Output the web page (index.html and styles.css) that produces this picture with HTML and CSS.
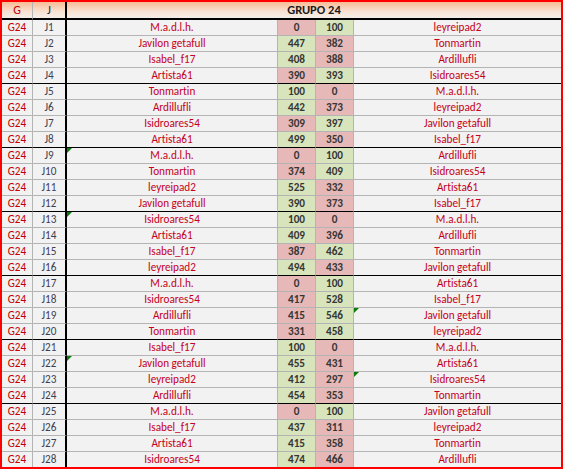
FILE: index.html
```html
<!DOCTYPE html>
<html>
<head>
<meta charset="utf-8">
<link rel="stylesheet" href="styles.css">
</head>
<body>
<div class="sheet">
  <div class="c hd g">G</div><div class="c hd j sep">J</div><div class="c hd title">GRUPO 24</div>

  <div class="c g">G24</div><div class="c j sep">J1</div><div class="c n">M.a.d.l.h.</div><div class="c s red">0</div><div class="c s grn">100</div><div class="c n last">leyreipad2</div>
  <div class="c g">G24</div><div class="c j sep">J2</div><div class="c n">Javilon getafull</div><div class="c s grn">447</div><div class="c s red">382</div><div class="c n last">Tonmartin</div>
  <div class="c g">G24</div><div class="c j sep">J3</div><div class="c n">Isabel_f17</div><div class="c s grn">408</div><div class="c s red">388</div><div class="c n last">Ardillufli</div>
  <div class="c g end">G24</div><div class="c j sep end">J4</div><div class="c n end">Artista61</div><div class="c s red end">390</div><div class="c s grn end">393</div><div class="c n last end">Isidroares54</div>

  <div class="c g">G24</div><div class="c j sep">J5</div><div class="c n">Tonmartin</div><div class="c s grn">100</div><div class="c s red">0</div><div class="c n last">M.a.d.l.h.</div>
  <div class="c g">G24</div><div class="c j sep">J6</div><div class="c n">Ardillufli</div><div class="c s grn">442</div><div class="c s red">373</div><div class="c n last">leyreipad2</div>
  <div class="c g">G24</div><div class="c j sep">J7</div><div class="c n">Isidroares54</div><div class="c s red">309</div><div class="c s grn">397</div><div class="c n last">Javilon getafull</div>
  <div class="c g end">G24</div><div class="c j sep end">J8</div><div class="c n end">Artista61</div><div class="c s grn end">499</div><div class="c s red end">350</div><div class="c n last end">Isabel_f17</div>

  <div class="c g">G24</div><div class="c j sep">J9</div><div class="c n"><span class="mark"></span>M.a.d.l.h.</div><div class="c s red">0</div><div class="c s grn">100</div><div class="c n last">Ardillufli</div>
  <div class="c g">G24</div><div class="c j sep">J10</div><div class="c n">Tonmartin</div><div class="c s red">374</div><div class="c s grn">409</div><div class="c n last">Isidroares54</div>
  <div class="c g">G24</div><div class="c j sep">J11</div><div class="c n">leyreipad2</div><div class="c s grn">525</div><div class="c s red">332</div><div class="c n last">Artista61</div>
  <div class="c g end">G24</div><div class="c j sep end">J12</div><div class="c n end">Javilon getafull</div><div class="c s grn end">390</div><div class="c s red end">373</div><div class="c n last end">Isabel_f17</div>

  <div class="c g">G24</div><div class="c j sep">J13</div><div class="c n"><span class="mark"></span>Isidroares54</div><div class="c s grn">100</div><div class="c s red">0</div><div class="c n last">M.a.d.l.h.</div>
  <div class="c g">G24</div><div class="c j sep">J14</div><div class="c n">Artista61</div><div class="c s grn">409</div><div class="c s red">396</div><div class="c n last">Ardillufli</div>
  <div class="c g">G24</div><div class="c j sep">J15</div><div class="c n">Isabel_f17</div><div class="c s red">387</div><div class="c s grn">462</div><div class="c n last">Tonmartin</div>
  <div class="c g end">G24</div><div class="c j sep end">J16</div><div class="c n end">leyreipad2</div><div class="c s grn end">494</div><div class="c s red end">433</div><div class="c n last end">Javilon getafull</div>

  <div class="c g">G24</div><div class="c j sep">J17</div><div class="c n">M.a.d.l.h.</div><div class="c s red">0</div><div class="c s grn">100</div><div class="c n last">Artista61</div>
  <div class="c g">G24</div><div class="c j sep">J18</div><div class="c n">Isidroares54</div><div class="c s red">417</div><div class="c s grn">528</div><div class="c n last">Isabel_f17</div>
  <div class="c g">G24</div><div class="c j sep">J19</div><div class="c n">Ardillufli</div><div class="c s red">415</div><div class="c s grn">546</div><div class="c n last"><span class="mark"></span>Javilon getafull</div>
  <div class="c g end">G24</div><div class="c j sep end">J20</div><div class="c n end">Tonmartin</div><div class="c s red end">331</div><div class="c s grn end">458</div><div class="c n last end">leyreipad2</div>

  <div class="c g">G24</div><div class="c j sep">J21</div><div class="c n">Isabel_f17</div><div class="c s grn">100</div><div class="c s red">0</div><div class="c n last">M.a.d.l.h.</div>
  <div class="c g">G24</div><div class="c j sep">J22</div><div class="c n"><span class="mark"></span>Javilon getafull</div><div class="c s grn">455</div><div class="c s red">431</div><div class="c n last">Artista61</div>
  <div class="c g">G24</div><div class="c j sep">J23</div><div class="c n">leyreipad2</div><div class="c s grn">412</div><div class="c s red">297</div><div class="c n last"><span class="mark"></span>Isidroares54</div>
  <div class="c g end">G24</div><div class="c j sep end">J24</div><div class="c n end">Ardillufli</div><div class="c s grn end">454</div><div class="c s red end">353</div><div class="c n last end">Tonmartin</div>

  <div class="c g">G24</div><div class="c j sep">J25</div><div class="c n">M.a.d.l.h.</div><div class="c s red">0</div><div class="c s grn">100</div><div class="c n last">Javilon getafull</div>
  <div class="c g">G24</div><div class="c j sep">J26</div><div class="c n">Isabel_f17</div><div class="c s grn">437</div><div class="c s red">311</div><div class="c n last">leyreipad2</div>
  <div class="c g">G24</div><div class="c j sep">J27</div><div class="c n">Artista61</div><div class="c s grn">415</div><div class="c s red">358</div><div class="c n last">Tonmartin</div>
  <div class="c g bottom">G24</div><div class="c j sep bottom">J28</div><div class="c n bottom">Isidroares54</div><div class="c s grn bottom">474</div><div class="c s red bottom">466</div><div class="c n last bottom">Ardillufli</div>
</div>
</body>
</html>
```

FILE: styles.css
```css
* { box-sizing: border-box; }
html, body { margin: 0; padding: 0; background: #ffffff; }

.sheet {
  width: 563px;
  height: 469px;
  border: 2px solid #ff0000;
  display: grid;
  grid-template-columns: 31px 34px 211px 38px 38px 207px;
  grid-template-rows: 18px repeat(27, 16px) 15px;
  font-family: Carlito, "Liberation Sans", Arial, sans-serif;
  font-size: 11.2px;
  font-variant-ligatures: none;
  background: #f2f2f2;
}

.c {
  position: relative;
  background: #f2f2f2;
  border-right: 1px solid #b4b4b4;
  border-bottom: 1px solid #b4b4b4;
  text-align: center;
  line-height: 15px;
  white-space: nowrap;
  overflow: visible;
}

.c.sep { border-right: 2px solid #000000; }
.c.last { border-right: none; }
.c.end { border-bottom: 1px solid #000000; }
.c.bottom { border-bottom: none; }

.hd {
  background: linear-gradient(#f8bc95, #f8e2d3 60%, #f5efea);
  border-bottom: 2px solid #000000;
  line-height: 16px;
}
.hd.g { color: #c00000; font-size: 12px; }
.hd.j { color: #1f2a44; font-size: 12px; }
.hd.title {
  grid-column: 3 / 7;
  border-right: none;
  font-weight: bold;
  font-size: 12.5px;
  color: #1a1a1a;
}

.g { color: #c00000; }
.j { color: #3c4052; }
.n { color: #c4001c; }

.s {
  font-weight: bold;
  color: #363636;
}
.s.red { background: #e6b8b7; }
.s.grn { background: #d8e4bc; }

.mark {
  position: absolute;
  top: 0;
  left: 0;
  width: 0;
  height: 0;
  border-top: 5px solid #0a7a0a;
  border-right: 5px solid transparent;
}
```
